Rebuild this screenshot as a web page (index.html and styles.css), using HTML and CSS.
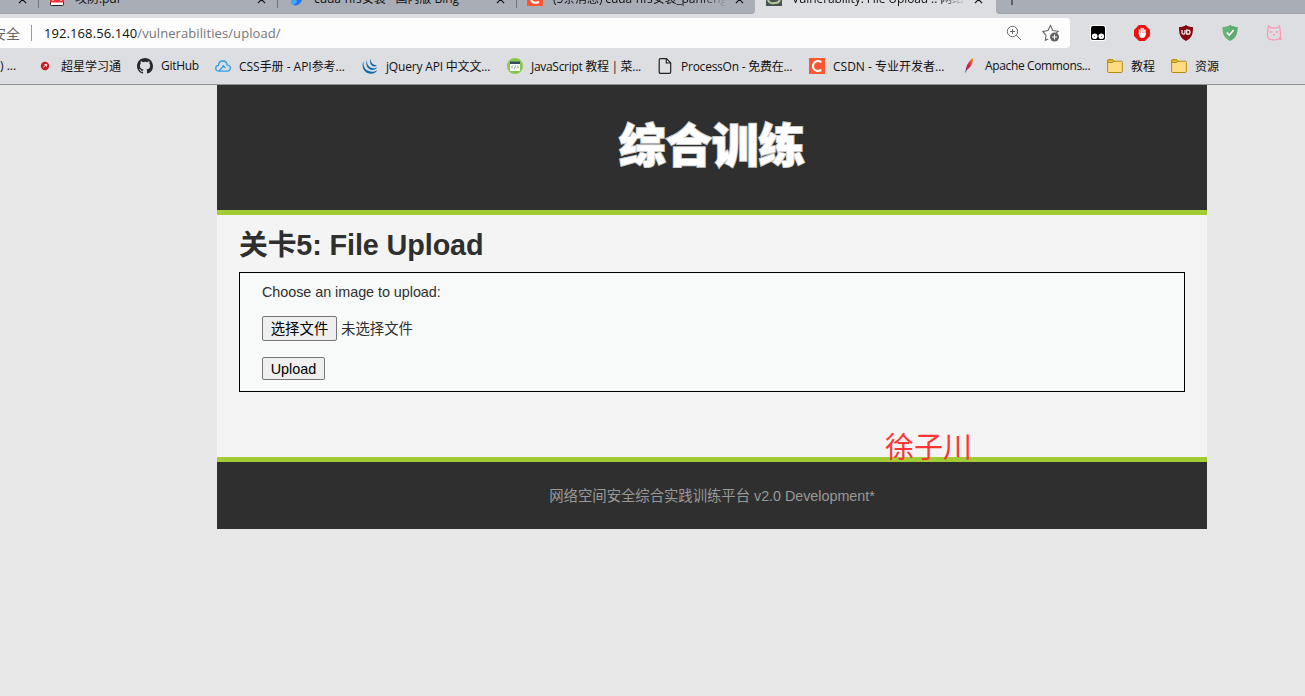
FILE: index.html
```html
<!DOCTYPE html>
<html lang="zh-CN">
<head>
<meta charset="utf-8">
<title>Vulnerability: File Upload</title>
<link rel="stylesheet" href="styles.css">
</head>
<body>
<div class="browser">
  <div class="tabs">
    <div class="tab tab-first"><svg class="close" viewBox="0 0 10 10"><path d="M1 1l8 8M9 1l-8 8"/></svg></div>
    <div class="tab"><svg class="fav" viewBox="0 0 16 16"><rect x="1.5" y="1" width="13" height="14.5" rx="1" fill="#fff" stroke="#222"/><path d="M1 2h14v10.500H1z" fill="#ee3035"/><path d="M4 11V7h2v3M9 10V6M12 11V7" stroke="#fff" fill="none"/></svg><span class="tab-title t1">攻防.pdf</span><svg class="close" viewBox="0 0 10 10"><path d="M1 1l8 8M9 1l-8 8"/></svg></div>
    <div class="tab"><svg class="fav" viewBox="0 0 16 16"><path d="M3 0l4 2v10l-4-3z" fill="#2b8cff"/><path d="M3 11l7-4 4 2c0 3-3 6-6 6.500-2 .3-5-1.500-5-4.500z" fill="#2474ee"/><path d="M3 11l5-2 1 3-3 3c-2-.5-3-2-3-4z" fill="#45a6ff"/></svg><span class="tab-title t2">cuda-nfs安装 - 国内版 Bing</span><svg class="close" viewBox="0 0 10 10"><path d="M1 1l8 8M9 1l-8 8"/></svg></div>
    <div class="tab tab-csdn"><svg class="fav" viewBox="0 0 16 16"><path d="M0 0h16v16H0z" fill="#fc5531"/><path d="M12 4C7 1 4 4 4 8s3 6 8 4" fill="none" stroke="#fff" stroke-width="2"/></svg><span class="tab-title t3">(5条消息) cuda-nfs安装_panfeng</span><svg class="close" viewBox="0 0 10 10"><path d="M1 1l8 8M9 1l-8 8"/></svg></div>
    <div class="tab tab-active"><svg class="fav" viewBox="0 0 16 16"><path d="M0 0h16v16H0z" fill="#4b534f"/><path d="M2 9c0 3 3 5 7 4 3 0 5-2 5-5" fill="none" stroke="#b4c99c" stroke-width="2"/><path d="M5 9h6" stroke="#fff" stroke-width="2"/></svg><span class="tab-title t4">Vulnerability: File Upload :: 网络空</span><svg class="close" viewBox="0 0 10 10"><path d="M1 1l8 8M9 1l-8 8"/></svg></div>
    <div class="tab-new"><svg class="plus" viewBox="0 0 12 12"><path d="M6 0v12M0 6h12"/></svg></div>
  </div>
  <div class="toolbar">
    <div class="address">
      <span class="secure">安全</span><span class="divider"></span>
      <span class="url"><b>192.168.56.140</b>/vulnerabilities/upload/</span>
      <svg class="zoom" viewBox="0 0 16 16"><circle cx="6.5" cy="6.5" r="5.2"/><path d="M10.3 10.3l4.7 4.7M4 6.5h5M6.500 4v5"/></svg>
      <svg class="star" viewBox="0 0 18 18"><path d="M6.300 15l-3 1.300.7-5L.9 7.400l5-.8L8.500 1.500l2.400 5 5.200.8-2.300 2"/><circle cx="12.500" cy="13" r="4.500" class="dot"/><path d="M12.500 10.500v5M10 13h5" class="dot-plus"/></svg>
    </div>
    <div class="extensions">
      <svg viewBox="0 0 16 16"><rect x="0" y="0" width="16" height="16" rx="3" fill="#fff"/><rect x="1" y="1" width="14" height="14" rx="2" fill="#000"/><circle cx="4.700" cy="11.300" r="2.800" fill="#fff"/><circle cx="11.300" cy="11.300" r="2.800" fill="#fff"/><path d="M4 11h1v1H4zM11 11h1v1h-1z" fill="#777"/></svg>
      <svg viewBox="0 0 16 16"><path d="M5 0h6l5 5v6l-5 5H5l-5-5V5z" fill="#ec1010"/><path d="M5.500 5v4M7.300 3.500V8M9.100 3.500V8M10.900 5v5" stroke="#fff" stroke-width="1.500" stroke-linecap="round"/><path d="M4.700 8h7c0 3-1 5-3.200 5S5.200 12 4.700 8z" fill="#fff"/></svg>
      <svg viewBox="0 0 16 16"><path d="M8 0c2 1.500 4 2 7 2 0 7-1 11-7 14C2 13 1 9 1 2c3 0 5-.5 7-2z" fill="#850510"/><path d="M4 5v3q0 1.200 1.500 1.200T7 8V5" stroke="#fff" fill="none" stroke-width="1.200"/><path d="M8.700 5.200H10a2 2 0 0 1 0 4H8.700z" fill="none" stroke="#fff" stroke-width="1.200"/></svg>
      <svg viewBox="0 0 16 16"><path d="M8 0c2 1.500 5 2 7.500 2C15.500 9 14 13 8 16 2 13 .5 9 .5 2 3 2 6 1.500 8 0z" fill="#67b279"/><path d="M8 0c2 1.500 5 2 7.500 2C15.500 9 14 13 8 16z" fill="#5faa70"/><path d="M4.700 7.500l2.600 2.600 4.400-5" stroke="#fff" stroke-width="1.500" fill="none"/></svg>
      <svg viewBox="0 0 16 16"><path d="M2 5L2.500.8 5 3h6L13.500.8 14 5c1 4 1 7-1 9l-5 1.200-5-1.200C1 12 1 9 2 5zM3.500 7H6.500M9.500 7H12.500M7 9.500l1 .6 1-.6M14 12l1.500 2-2 .5" fill="none" stroke="#f79db6" stroke-width="1.300"/></svg>
    </div>
  </div>
  <div class="bookmarks">
    <div class="bm bm-cut"><span>) ...</span></div>
    <div class="bm w100"><svg viewBox="0 0 16 16"><circle cx="8" cy="8" r="4.200" fill="#c51c22"/><path d="M6.300 9.300L9.500 6.300M7.500 6.500l2.300.2-.5 2" stroke="#fff" stroke-width=".9" fill="none"/></svg><span class="b1">超星学习通</span></div>
    <div class="bm w78"><svg viewBox="0 0 16 16"><path fill="#24292e" d="M8 0C3.580 0 0 3.580 0 8c0 3.540 2.290 6.530 5.470 7.590.4.070.55-.17.55-.38 0-.19-.01-.82-.01-1.490-2.010.37-2.530-.49-2.690-.94-.09-.23-.48-.94-.82-1.130-.28-.15-.68-.52-.01-.53.63-.01 1.080.58 1.230.82.72 1.210 1.870.87 2.330.66.07-.52.28-.87.51-1.070-1.780-.2-3.640-.89-3.640-3.950 0-.87.31-1.590.82-2.150-.08-.2-.36-1.020.08-2.120 0 0 .67-.21 2.200.82a7.600 7.600 0 0 1 4 0c1.530-1.040 2.200-.82 2.200-.82.44 1.100.16 1.920.08 2.120.51.56.82 1.270.82 2.150 0 3.070-1.870 3.750-3.650 3.950.29.25.54.73.54 1.480 0 1.070-.01 1.930-.01 2.200 0 .21.15.46.55.38A8.010 8.010 0 0 0 16 8c0-4.420-3.580-8-8-8z"/></svg><span class="b2">GitHub</span></div>
    <div class="bm w147"><svg viewBox="0 0 16 16"><path d="M10.500 10L7.700 7.200M8.500 8L4 13.200C2 13.200.7 12 .7 10.300S2 7.400 3.500 7.300C3.700 4.700 5.500 3 7.800 3s4 1.500 4.300 3.900c2 .2 3.200 1.500 3.200 3.200s-1.300 3.100-3.200 3.100H4" fill="none" stroke="#2c9fe5" stroke-width="1.300"/></svg><span class="b3">CSS手册 - API参考...</span></div>
    <div class="bm w145"><svg viewBox="0 0 16 16"><g fill="#1269aa"><path d="M1.800 3C-1.500 8 2 15.800 9 15.800c3.200 0 5.300-1.500 6.500-3.800-2 1.500-4.500 2.200-7 1.600C3 12.500.5 8 1.800 3z"/><path d="M5.200 1.500C2.500 6.500 6 12 10.500 12c2.200 0 3.700-1 4.700-2.700-1.500 1-3 1.300-4.500 1C6.800 9.500 4 5.500 5.200 1.500z"/><path d="M8.800.8c-2 3.500.5 7.700 3.500 7.700 1.300 0 2.200-.6 2.800-1.500C11.800 8 8.200 4.500 8.800.8z"/></g></svg><span class="b4">jQuery API 中文文...</span></div>
    <div class="bm w150"><svg viewBox="0 0 16 16"><circle cx="8" cy="8" r="8" fill="#86c94a"/><path d="M3 4h10v9H3z" fill="#fff"/><path d="M3 3.500h10V6H3z" fill="#344d61"/><path d="M6 7.500L4.500 9 6 10.500M10 7.500L11.500 9 10 10.500M8.500 7.500l-1 3" stroke="#60756b" fill="none" stroke-width=".8"/></svg><span class="b5">JavaScript 教程 | 菜...</span></div>
    <div class="bm w152"><svg viewBox="0 0 16 16"><path d="M3.500.7h6l4.200 4.200v9q0 1.400-1.400 1.400h-8.800Q2.200 15.300 2.200 14V2Q2.200.7 3.500.7zM9.300.7V5h4.400" fill="none" stroke="#222" stroke-width="1.200"/></svg><span class="b6">ProcessOn - 免费在...</span></div>
    <div class="bm w152"><svg viewBox="0 0 16 16"><path d="M0 0h16v16H0z" fill="#fc5531"/><path d="M12.500 4.200C8 1.500 4 4 4 8.200s4 5.800 8.500 3.800" fill="none" stroke="#fff" stroke-width="2"/></svg><span class="b7">CSDN - 专业开发者...</span></div>
    <div class="bm w146"><svg viewBox="0 0 16 16"><defs><linearGradient id="feather" x1="0" y1="1" x2="1" y2="0"><stop offset="0" stop-color="#7d3c98"/><stop offset=".5" stop-color="#d22145"/><stop offset="1" stop-color="#f79a23"/></linearGradient></defs><path d="M4 15.500L5 10C6 6 9 2 12 0c.5 4-1 8-6 12z" fill="url(#feather)"/></svg><span class="b8">Apache Commons...</span></div>
    <div class="bm w64"><svg viewBox="0 0 16 16"><path d="M.6 3q0-1.400 1.400-1.400h3.500L7 3.200h7q1.400 0 1.400 1.400v8.600q0 1.300-1.400 1.300H2q-1.400 0-1.400-1.300z" fill="#ffdc80" stroke="#b68a11"/><path d="M.6 4.500h4.800L7 3.200 5.500 1.600H2Q.6 1.600.6 3z" fill="#e8b72f" stroke="#b68a11"/></svg><span class="b9">教程</span></div>
    <div class="bm w64"><svg viewBox="0 0 16 16"><path d="M.6 3q0-1.400 1.400-1.400h3.500L7 3.200h7q1.400 0 1.400 1.400v8.600q0 1.300-1.400 1.300H2q-1.400 0-1.400-1.300z" fill="#ffdc80" stroke="#b68a11"/><path d="M.6 4.500h4.800L7 3.200 5.500 1.600H2Q.6 1.600.6 3z" fill="#e8b72f" stroke="#b68a11"/></svg><span class="b9">资源</span></div>
  </div>
</div>
<div class="page">
  <header class="header"><svg class="logo" viewBox="0 0 190 60"><text x="2" y="46.500" textLength="186" lengthAdjust="spacingAndGlyphs">综合训练</text></svg></header>
  <main class="main">
    <h1>关卡5: File Upload</h1>
    <form class="upload">
      <p>Choose an image to upload:</p>
      <div class="file"><button type="button" class="btn choose">选择文件</button><span>未选择文件</span></div>
      <button type="button" class="btn submit">Upload</button>
    </form>
    <span class="signature">徐子川</span>
  </main>
  <footer class="footer">网络空间安全综合实践训练平台 v2.0 Development*</footer>
</div>
</body>
</html>
```
FILE: styles.css
```css
* { box-sizing: border-box; }
body {
  margin: 0;
  height: 696px;
  overflow: hidden;
  background: #e7e7e7;
  font-family: "Liberation Sans", "Noto Sans CJK SC", sans-serif;
}
svg { display: block; flex: none; }
.browser {
  height: 85px;
  background: #dddee2;
  border-bottom: 1px solid #929396;
  font-family: "Open Sans", "Noto Sans CJK SC", sans-serif;
  color: #111;
}
/* tab strip, scrolled so only the lower part of each tab shows */
.tabs { display: flex; height: 14px; overflow: hidden; background: #dddee2; }
.tab {
  display: flex;
  width: 239px;
  height: 14px;
  flex: none;
  padding-left: 10px;
  background: #a9adb5;
  border-bottom: 1px solid #9fa3aa;
  position: relative;
}
.tab::after { content: ""; position: absolute; right: 0; top: 0; width: 1px; height: 8px; background: #70747b; }
.tab-first { width: 39px; padding-left: 17px; }
.tab-csdn { width: 238px; border-radius: 0 0 4px 0; }
.tab-csdn::after, .tab-active::after { display: none; }
.tab-active { width: 241px; padding-left: 11px; background: #dddee2; border: 0; }
.tab-new { flex: 1; background: #a9adb5; border-bottom: 1px solid #9fa3aa; border-radius: 0 0 0 4px; padding-left: 11px; }
.fav { width: 16px; height: 16px; margin-top: -10px; }
.tab-title {
  width: 174px;
  height: 20px;
  margin: -11px 10px 0;
  font-size: 12px;
  line-height: 20px;
  letter-spacing: -.05px;
  white-space: nowrap;
  overflow: hidden;
}
.t3, .t4 { letter-spacing: -.1px; -webkit-mask-image: linear-gradient(90deg, #000 85%, transparent); mask-image: linear-gradient(90deg, #000 85%, transparent); }
.close { width: 9px; height: 9px; margin-top: -5px; margin-left: -2px; stroke: #111; stroke-width: 1.3; }
.tab-first .close { margin-left: 1px; }
.plus { width: 12px; height: 12px; margin-top: -7px; margin-left: -1px; stroke: #111; }
.toolbar { display: flex; align-items: center; height: 38px; }
.address {
  display: flex;
  align-items: center;
  width: 1070px;
  height: 30px;
  background: #fdfdfd;
  border-radius: 0 4px 4px 0;
}
.secure { width: 31px; margin-left: -8px; margin-right: 8px; font-size: 14px; color: #666; white-space: nowrap; }
.divider { width: 1px; height: 16px; background: #999; }
.url { width: 962px; margin-left: 12px; font-size: 13px; color: #767676; letter-spacing: .09px; white-space: nowrap; }
.url b { font-weight: 400; color: #111; }
.zoom { width: 16px; height: 16px; fill: none; stroke: #666; stroke-width: 1; }
.star { width: 18px; height: 18px; margin-left: 20px; fill: none; stroke: #666; stroke-width: 1.1; }
.star .dot { fill: #5f6063; stroke: none; }
.star .dot-plus { stroke: #fff; }
.extensions { display: flex; gap: 28px; margin-left: 20px; }
.extensions svg { width: 16px; height: 16px; }
.bookmarks { display: flex; align-items: center; height: 28px; font-size: 12px; }
.bm { display: flex; align-items: center; gap: 8px; flex: none; white-space: nowrap; }
.bm svg { width: 16px; height: 16px; }
.bm span { margin-top: -1px; }
.bm-cut { width: 37px; }
.w100 { width: 100px; }
.w78 { width: 78px; }
.w147 { width: 147px; }
.w145 { width: 145px; }
.w150 { width: 150px; }
.w152 { width: 152px; }
.w146 { width: 146px; }
.w64 { width: 64px; }
.b2 { letter-spacing: -.3px; }
.b3 { letter-spacing: -.03px; }
.b4 { letter-spacing: -.18px; }
.b5 { letter-spacing: -.3px; }
.b6 { letter-spacing: -.24px; }
.b8 { letter-spacing: -.36px; }
.page { width: 990px; margin-left: 217px; font-size: 14.4px; }
.header { display: flex; justify-content: center; height: 130px; padding-top: 30px; background: #2f2f2f; border-bottom: 5px solid #a1cc33; }
.logo { width: 190px; height: 60px; }
.logo text { font: 900 46px "Noto Sans CJK SC", sans-serif; fill: #fff; stroke: #c9c9c9; stroke-width: 2; paint-order: stroke; }
.main { position: relative; height: 242px; padding: 10px 22px 0; background: #f4f4f4; color: #2f2f2f; }
h1 { margin: 0 0 7px; height: 40px; line-height: 40px; font-size: 28.8px; letter-spacing: -.12px; font-weight: 700; white-space: nowrap; }
.upload { height: 120px; padding: 11px 22px 0; background: #f8faf9; border: 1px solid #000; }
.upload p { margin: 0 0 15px; height: 17px; line-height: 17px; letter-spacing: -.05px; }
.file { display: flex; align-items: center; gap: 4px; height: 25px; margin-bottom: 16px; white-space: nowrap; }
.file span { margin-top: -2px; }
.btn {
  padding: 0;
  background: #efefef;
  border: 1px solid #767676;
  border-radius: 2px;
  font: inherit;
  color: #000;
  line-height: 20px;
  white-space: nowrap;
}
.choose { width: 75px; height: 25px; }
.submit { display: block; width: 63px; height: 23px; }
.signature { position: absolute; left: 668px; top: 211px; font-size: 29px; line-height: 44px; color: #ff3535; white-space: nowrap; }
.footer { height: 72px; border-top: 5px solid #a1cc33; background: #2f2f2f; color: #999; text-align: center; line-height: 68px; letter-spacing: -.05px; }
```
